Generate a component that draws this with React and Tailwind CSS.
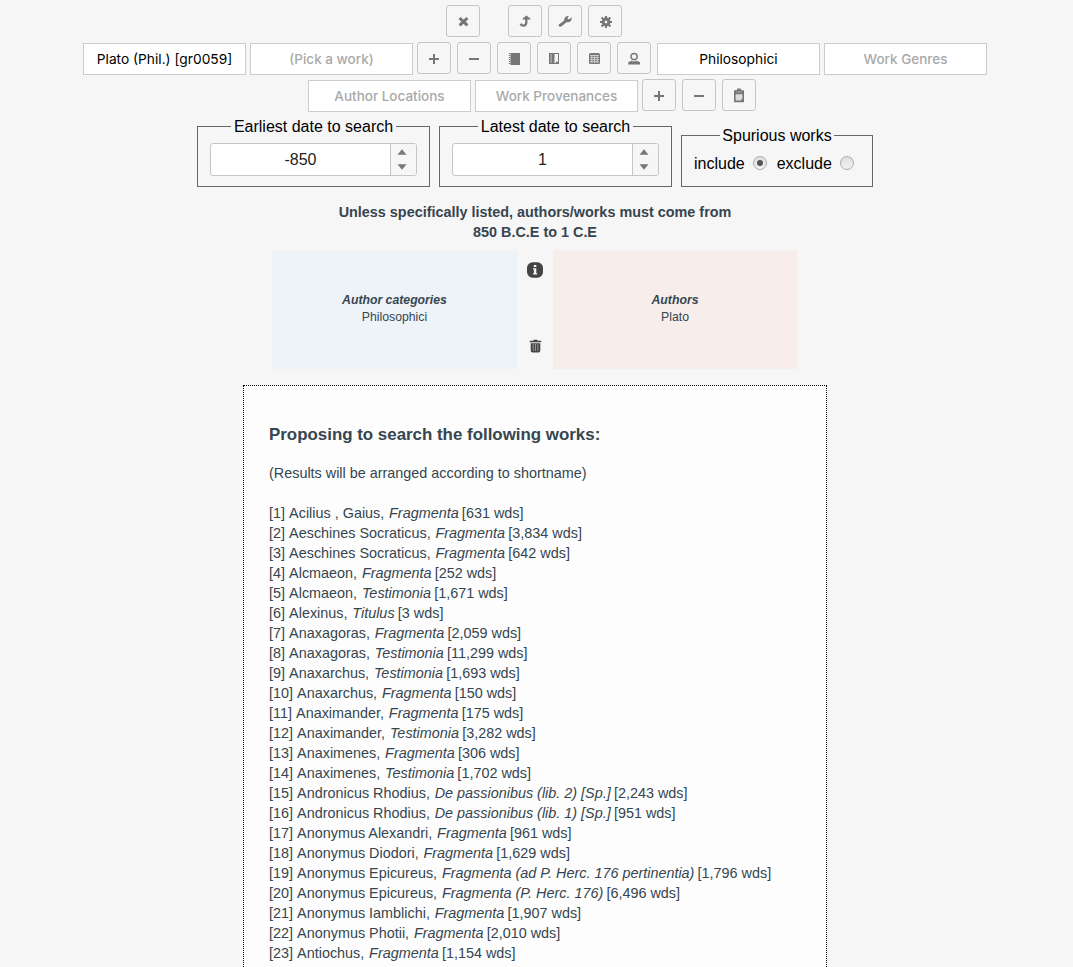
import React from "react";

const works = [
  ["Acilius , Gaius", "Fragmenta", "631"],
  ["Aeschines Socraticus", "Fragmenta", "3,834"],
  ["Aeschines Socraticus", "Fragmenta", "642"],
  ["Alcmaeon", "Fragmenta", "252"],
  ["Alcmaeon", "Testimonia", "1,671"],
  ["Alexinus", "Titulus", "3"],
  ["Anaxagoras", "Fragmenta", "2,059"],
  ["Anaxagoras", "Testimonia", "11,299"],
  ["Anaxarchus", "Testimonia", "1,693"],
  ["Anaxarchus", "Fragmenta", "150"],
  ["Anaximander", "Fragmenta", "175"],
  ["Anaximander", "Testimonia", "3,282"],
  ["Anaximenes", "Fragmenta", "306"],
  ["Anaximenes", "Testimonia", "1,702"],
  ["Andronicus Rhodius", "De passionibus (lib. 2) [Sp.]", "2,243"],
  ["Andronicus Rhodius", "De passionibus (lib. 1) [Sp.]", "951"],
  ["Anonymus Alexandri", "Fragmenta", "961"],
  ["Anonymus Diodori", "Fragmenta", "1,629"],
  ["Anonymus Epicureus", "Fragmenta (ad P. Herc. 176 pertinentia)", "1,796"],
  ["Anonymus Epicureus", "Fragmenta (P. Herc. 176)", "6,496"],
  ["Anonymus Iamblichi", "Fragmenta", "1,907"],
  ["Anonymus Photii", "Fragmenta", "2,010"],
  ["Antiochus", "Fragmenta", "1,154"],
];

const glyphs = {
  close: <path d="M4.6 5 12.4 12.4M12.4 5 4.6 12.4" stroke="currentColor" strokeWidth="3.1" />,
  enter: (
    <>
      <path d="M9.3 2.6 13.4 5.4V6.4H5.6V5.4Z" fill="currentColor" />
      <path d="M9.3 5V9.2C9.3 13.4 4.8 13.6 3.6 10.8" fill="none" stroke="currentColor" strokeWidth="2.3" />
    </>
  ),
  wrench: (
    <path
      d="M1.9 11.6 7.3 7.5C6.9 4.6 9 2.7 11.9 3L10.4 5.1 11.6 6.6 14.7 4.4C15.1 7.6 12.6 9.8 9.5 9.3L4.6 13.3C3.1 14.6 .8 13 1.9 11.6Z"
      fill="currentColor"
    />
  ),
  gear: (
    <>
      <path d="M9 3V15M3 9H15M4.6 4.6 13.4 13.4M13.4 4.6 4.6 13.4" stroke="currentColor" strokeWidth="2.1" />
      <circle cx="9" cy="9" r="3.1" fill="none" stroke="currentColor" strokeWidth="2.6" />
      <rect x="7.8" y="7.8" width="2.4" height="2.4" fill="#f6f6f6" />
    </>
  ),
  plus: <path d="M8 4V14M3 9H13" stroke="currentColor" strokeWidth="2" />,
  minus: <path d="M3 9H13" stroke="currentColor" strokeWidth="2" />,
  notebook: (
    <>
      <rect x="4.5" y="3" width="9.5" height="12" fill="currentColor" />
      <path d="M3.6 3V15" stroke="currentColor" strokeWidth="1.6" strokeDasharray="1 1" />
    </>
  ),
  bookmark: (
    <>
      <path d="M3 3H13V14H3Z" fill="currentColor" />
      <path d="M5.1 4V13" stroke="#f6f6f6" strokeWidth="0.6" />
      <path d="M8.5 4H12V12.5L10.5 11 9.6 13H8.5Z" fill="#f6f6f6" />
    </>
  ),
  calendar: (
    <>
      <rect x="3" y="3" width="11" height="11" rx="1.5" fill="currentColor" />
      <path d="M4 5.5H13M4 7.6H13M4 9.7H13M4 11.8H13M5.8 5.2V13M8.5 5.2V13M11.2 5.2V13" stroke="#f6f6f6" strokeWidth="0.6" />
    </>
  ),
  person: (
    <>
      <circle cx="8.1" cy="6.6" r="3.1" fill="none" stroke="currentColor" strokeWidth="1.4" />
      <path d="M2.2 14.4V12.2L5.4 10.7H10.8L14 12.2V14.4Z" fill="currentColor" />
      <path d="M6 10.9H10.2" stroke="#f6f6f6" strokeWidth="0.7" />
    </>
  ),
  clipboard: (
    <>
      <path d="M3 3.2H5.6L6.4 1.5H9.6L10.4 3.2H13V15.2H3Z" fill="currentColor" />
      <path d="M4.6 7.2H11.4V11.2L9.7 13.6H4.6Z" fill="#dcdcdc" />
      <path d="M5.5 5H10.5" stroke="#bbb" strokeWidth="0.7" />
    </>
  ),
  info: (
    <>
      <rect x="0" y="0.3" width="16" height="15.4" rx="5.6" fill="currentColor" />
      <path d="M6.8 3H9.3V5H6.8ZM6 6.2H9.3V11.2H10.2V12.6H6V11.2H6.9V7.6H6Z" fill="#f6f6f6" />
    </>
  ),
  trash: (
    <>
      <path d="M6.5 1.8H10.5V2.8H14.2V4.2H2.8V2.8H6.5ZM3.7 5.2H13.3V12.3Q13.3 14.6 11.5 14.6H5.5Q3.7 14.6 3.7 12.3Z" fill="currentColor" />
      <path d="M6.2 6V13M8.5 6V13M10.8 6V13" stroke="#bbb" strokeWidth="0.7" />
    </>
  ),
};

function Icon({ name }) {
  return (
    <svg viewBox="0 0 16 16" className="block size-4">
      {glyphs[name]}
    </svg>
  );
}

function IconButton({ name }) {
  return (
    <button className="flex h-8 w-[34px] shrink-0 items-center justify-center rounded-[3px] border border-[#c5c5c5] bg-[#f6f6f6] text-[#777]">
      <Icon name={name} />
    </button>
  );
}

function Field({ children, filled }) {
  return (
    <div
      className={`mt-px flex h-8 w-[163px] shrink-0 items-center justify-center border border-[#ccc] bg-white font-[Inter,sans-serif] leading-5 ${
        filled ? "text-[13.75px] text-black" : "text-[13.5px] font-medium text-[#a9a9a9]"
      }`}
    >
      <span className="whitespace-nowrap">{children}</span>
    </div>
  );
}

function DateBox({ label, value }) {
  return (
    <fieldset className="h-[70px] w-[233px] px-3">
      <div className="flex h-[70px] flex-col">
        <div className="-mx-3 flex h-[18px] items-center">
          <span className="h-px flex-1 bg-[#666]" />
          <span className="px-[3px] pt-0.5 text-[16px] leading-[18px] text-black">{label}</span>
          <span className="h-px flex-1 bg-[#666]" />
        </div>
        <div className="-mx-3 -mt-[9px] flex flex-1 flex-col border-x border-b border-[#666] px-3 pt-[17px]">
          <div className="flex h-[33px] overflow-hidden rounded-[3px] border border-[#c5c5c5] bg-white">
            <div className="flex flex-1 items-center justify-center text-[16px] text-[#222]">{value}</div>
            <div className="flex w-[26px] flex-col items-center justify-center gap-[9px] border-l border-[#c5c5c5] bg-[#f6f6f6] pr-[3px]">
              <svg viewBox="0 0 10 6" className="block h-1.5 w-2.5"><path d="M5 .3 9.5 5.8H.5Z" fill="#777" /></svg>
              <svg viewBox="0 0 10 6" className="block h-1.5 w-2.5"><path d="M.5.2H9.5L5 5.7Z" fill="#777" /></svg>
            </div>
          </div>
        </div>
      </div>
    </fieldset>
  );
}

function Radio({ checked }) {
  return (
    <span className="flex size-[14px] items-center justify-center rounded-full border border-[#aaa] bg-linear-to-b from-[#dedede] to-[#f2f2f2]">
      {checked && <span className="size-1.5 rounded-full bg-[#555]" />}
    </span>
  );
}

export default function App() {
  return (
    <div className="h-[967px] w-[1073px] overflow-hidden bg-[#f6f6f6] pt-[5px] font-['Liberation_Sans',Arial,sans-serif] text-[#36454f]">
      <div className="flex h-8 gap-1.5 pl-[446px]">
        <IconButton name="close" />
        <span className="w-4" />
        <IconButton name="enter" />
        <IconButton name="wrench" />
        <IconButton name="gear" />
      </div>
      <div className="mt-[5px] flex pl-[83px]">
        <div className="flex gap-1">
          <Field filled>Plato (Phil.) [gr0059]</Field>
          <Field>(Pick a work)</Field>
        </div>
        <div className="ml-1 flex gap-1.5">
          <IconButton name="plus" />
          <IconButton name="minus" />
          <IconButton name="notebook" />
          <IconButton name="bookmark" />
          <IconButton name="calendar" />
          <IconButton name="person" />
        </div>
        <div className="ml-1.5 flex gap-1">
          <Field filled>Philosophici</Field>
          <Field>Work Genres</Field>
        </div>
      </div>
      <div className="mt-1 flex pl-[308px]">
        <div className="flex gap-1">
          <Field>Author Locations</Field>
          <Field>Work Provenances</Field>
        </div>
        <div className="ml-1 flex gap-1.5">
          <IconButton name="plus" />
          <IconButton name="minus" />
          <IconButton name="clipboard" />
        </div>
      </div>

      <div className="mt-[5px] flex h-[70px] items-end gap-[9px] pl-[197px]">
        <DateBox label="Earliest date to search" value="-850" />
        <DateBox label="Latest date to search" value="1" />
        <div className="flex h-[61px] w-48 flex-col text-[16px] text-black">
          <div className="flex h-[18px] items-center">
            <span className="h-px w-[39px] bg-[#666]" />
            <span className="flex-1 pt-0.5 text-center leading-[18px]">Spurious works</span>
            <span className="h-px w-[39px] bg-[#666]" />
          </div>
          <div className="-mt-[9px] flex flex-1 items-start border-x border-b border-[#666] pl-3 pt-[19px] leading-5">
            <span>include</span>
            <span className="ml-2 pt-[2px]"><Radio checked /></span>
            <span className="ml-[10px]">exclude</span>
            <span className="ml-2 pt-[2px]"><Radio /></span>
          </div>
        </div>
      </div>

      <div className="mt-[15px] w-[1070px] text-center text-[14.4px] leading-5 font-bold">
        <p>Unless specifically listed, authors/works must come from</p>
        <p>850 B.C.E to 1 C.E</p>
      </div>

      <div className="mt-2 flex h-[119px] pl-[272px] text-center text-[12.25px] leading-[17px]">
        <div className="w-[245px] bg-[#edf3f7] pt-[42px]">
          <p className="font-bold italic">Author categories</p>
          <p>Philosophici</p>
        </div>
        <div className="flex w-9 flex-col items-center gap-[60px] pt-3 text-[#444]">
          <Icon name="info" />
          <Icon name="trash" />
        </div>
        <div className="w-[244px] bg-[#f7eeec] pt-[42px]">
          <p className="font-bold italic">Authors</p>
          <p>Plato</p>
        </div>
      </div>

      <div className="mt-4 ml-[243px] h-[700px] w-[584px] border border-dotted border-black bg-[#fdfdfd] pt-[39px] pl-[25px] text-[14.4px] leading-5">
        <h3 className="text-[16.9px] font-bold">Proposing to search the following works:</h3>
        <p className="mt-[18px]">(Results will be arranged according to shortname)</p>
        <div className="mt-5">
          {works.map(([author, title, words], i) => (
            <p key={i} className="whitespace-nowrap">
              [{i + 1}] <span className="ml-[0.1px]">{author},</span> <i className="-mr-[0.8px] ml-[0.8px]">{title}</i> [{words} wds]
            </p>
          ))}
        </div>
      </div>
    </div>
  );
}
